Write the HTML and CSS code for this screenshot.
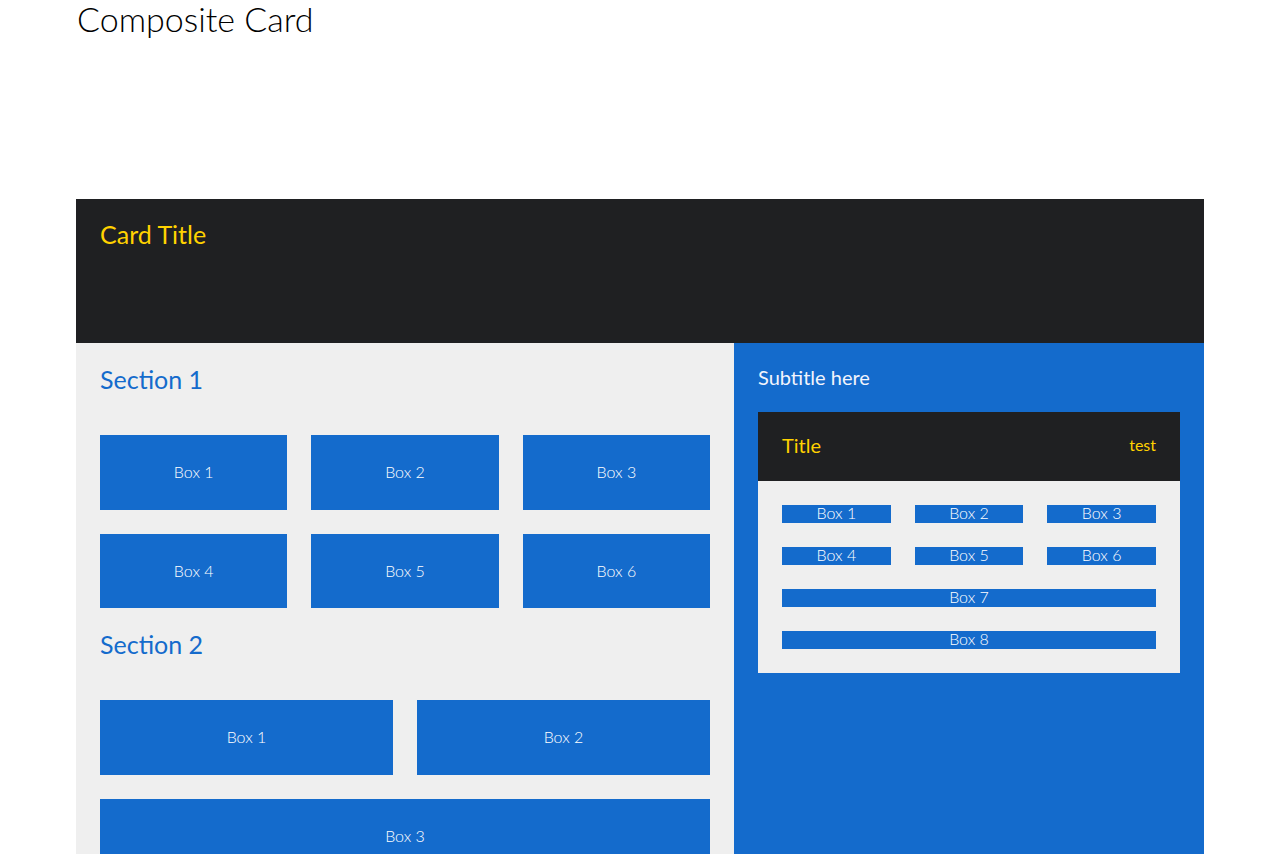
FILE: index.html
```html
<!DOCTYPE html>
<html lang="en">
<head>
<meta charset="utf-8">
<title>Composite Card</title>
<link rel="stylesheet" href="styles.css">
</head>
<body>
<div class="container">
  <h1 class="page-title">Composite Card</h1>
  <div class="card">
    <div class="card-header">
      <h2 class="card-title">Card Title</h2>
    </div>
    <div class="card-body">
      <div class="main">
        <h3 class="section-title">Section 1</h3>
        <div class="grid grid-3">
          <div class="box">Box 1</div>
          <div class="box">Box 2</div>
          <div class="box">Box 3</div>
          <div class="box">Box 4</div>
          <div class="box">Box 5</div>
          <div class="box">Box 6</div>
        </div>
        <h3 class="section-title">Section 2</h3>
        <div class="grid grid-2">
          <div class="box">Box 1</div>
          <div class="box">Box 2</div>
          <div class="box span-2">Box 3</div>
        </div>
      </div>
      <div class="side">
        <div class="subtitle">Subtitle here</div>
        <div class="inner-card">
          <div class="inner-header">
            <span class="inner-title">Title</span>
            <span class="inner-meta">test</span>
          </div>
          <div class="inner-body">
            <div class="mini">Box 1</div>
            <div class="mini">Box 2</div>
            <div class="mini">Box 3</div>
            <div class="mini">Box 4</div>
            <div class="mini">Box 5</div>
            <div class="mini">Box 6</div>
            <div class="mini span-3">Box 7</div>
            <div class="mini span-3">Box 8</div>
          </div>
        </div>
      </div>
    </div>
  </div>
</div>
</body>
</html>
```

FILE: styles.css
```css
* { box-sizing: border-box; }
html, body { margin: 0; padding: 0; background: #ffffff; }
body {
  font-family: Lato, "Noto Sans", sans-serif;
  color: #000;
}
.container {
  width: 1128px;
  margin: 0 auto;
}
.page-title {
  margin: 0 0 161px 0;
  font-size: 34px;
  font-weight: 300;
  line-height: 38px;
  padding-left: 1px;
}
.card { display: flex; flex-direction: column; }
.card-header {
  background: #1f2022;
  height: 144px;
  padding: 24px;
}
.card-title {
  margin: 0;
  color: #ffd200;
  font-size: 25px;
  font-weight: 400;
  line-height: 22px;
}
.card-body {
  display: flex;
  min-height: 600px;
}
.main {
  width: 658px;
  background: #efefef;
  padding: 24px;
}
.section-title {
  margin: 0 0 44px 0;
  color: #146bcc;
  font-size: 25px;
  font-weight: 400;
  line-height: 24px;
}
.grid {
  display: grid;
  gap: 24px;
  margin-bottom: 24px;
}
.grid-3 { grid-template-columns: repeat(3, 1fr); }
.grid-2 { grid-template-columns: repeat(2, 1fr); }
.span-2 { grid-column: span 2; }
.box {
  background: #146bcc;
  color: #ffffff;
  font-size: 16px;
  font-weight: 300;
  line-height: 18px;
  height: 74.5px;
  display: flex;
  align-items: center;
  justify-content: center;
}
.side {
  flex: 1;
  background: #146bcc;
  padding: 24px;
}
.subtitle {
  color: #f2f4fc;
  font-size: 20px;
  font-weight: 400;
  line-height: 21px;
  margin-bottom: 24px;
}
.inner-card { display: flex; flex-direction: column; }
.inner-header {
  background: #1f2022;
  padding: 24px;
  display: flex;
  justify-content: space-between;
  align-items: center;
  height: 69px;
}
.inner-title {
  color: #ffd200;
  font-size: 20px;
  line-height: 19px;
  margin-top: -2px;
}
.inner-meta {
  color: #ffd200;
  font-size: 16px;
  line-height: 16px;
  margin-top: -4px;
}
.inner-body {
  background: #efefef;
  padding: 24px;
  display: grid;
  grid-template-columns: repeat(3, 1fr);
  gap: 24px;
}
.span-3 { grid-column: span 3; }
.mini {
  background: #146bcc;
  color: #ffffff;
  font-size: 16px;
  font-weight: 300;
  line-height: 16px;
  height: 18px;
  text-align: center;
}
```
